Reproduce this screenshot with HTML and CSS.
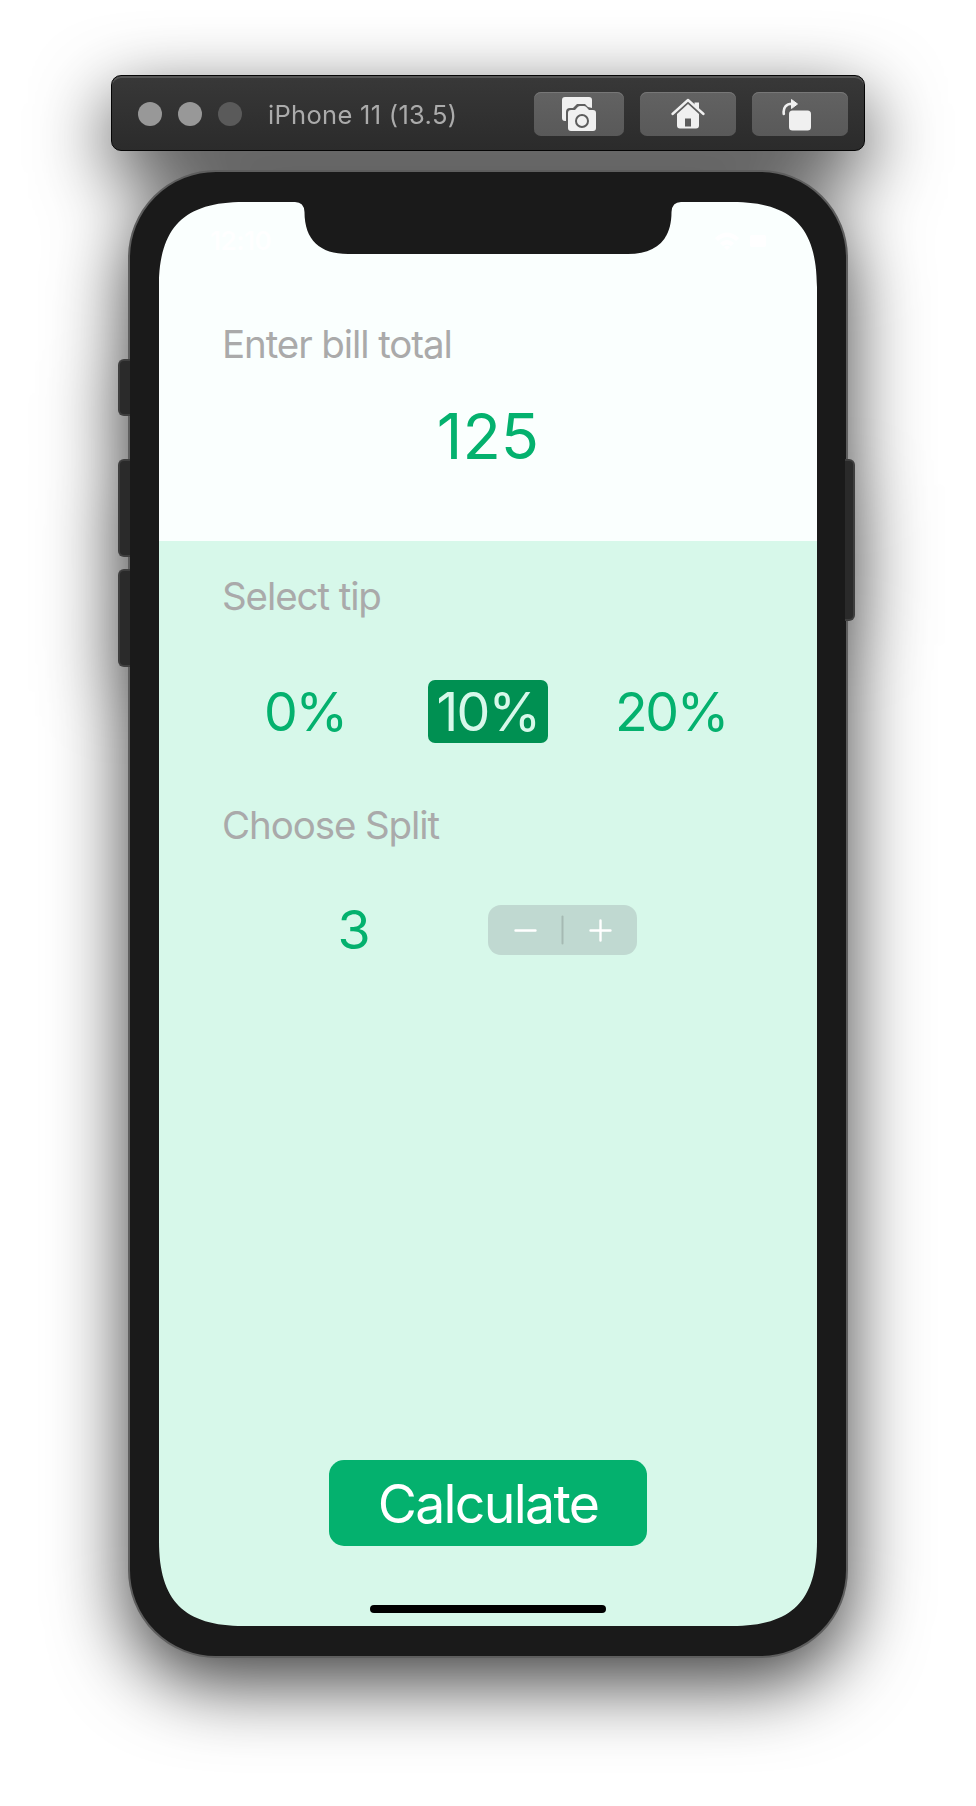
FILE: index.html
```
<!DOCTYPE html>
<html lang="en">
<head>
<meta charset="utf-8">
<title>Tip calculator</title>
<link rel="stylesheet" href="styles.css">
</head>
<body>
<div class="window">
<header class="toolbar">
  <span class="dot"></span><span class="dot"></span><span class="dot dot-dim"></span>
  <h1 class="toolbar-title">iPhone 11 (13.5)</h1>
  <div class="tool tool-shot">
    <svg width="36" height="36" viewBox="0 0 36 36">
      <path fill="#f0f0f0" d="M4 1h24a3 3 0 0 1 3 3v8l-4-1-3-3h-8l-4 4h-3a4 4 0 0 0-4 4V25H4a3 3 0 0 1-3-3V4a3 3 0 0 1 3-3z"/>
      <path fill="#f0f0f0" fill-rule="evenodd" d="M10 14h4l3-3.200q1-.8 2-.8h4q1 0 2 .8l3 3.200h4a3 3 0 0 1 3 3v15a3 3 0 0 1-3 3H10a3 3 0 0 1-3-3V17a3 3 0 0 1 3-3zm11 4a7 7 0 1 0 0 14 7 7 0 0 0 0-14zm0 2a5 5 0 1 1 0 10 5 5 0 0 1 0-10z"/>
    </svg>
  </div>
  <div class="tool">
    <svg width="36" height="36" viewBox="0 0 36 36">
      <path d="M2.500 18L18 4l15.500 14" fill="none" stroke="#f0f0f0" stroke-width="2.400" stroke-linecap="round" stroke-linejoin="round"/>
      <path fill="#f0f0f0" d="M24.500 6.500h4.500v7l-4.500-4z"/>
      <path fill="#f0f0f0" fill-rule="evenodd" d="M18 8l11 10V29.500a3 3 0 0 1-3 3H10a3 3 0 0 1-3-3V18zM15 22.500v8h6v-8z"/>
    </svg>
  </div>
  <div class="tool">
    <svg width="36" height="36" viewBox="0 0 36 36">
      <path d="M1.800 18C0.800 11 4.500 7.800 10 7.800" fill="none" stroke="#f0f0f0" stroke-width="2.600" stroke-linecap="round"/>
      <path fill="#f0f0f0" stroke="#f0f0f0" stroke-linejoin="round" d="M9.500 3.500v9l6-4.500z"/>
      <rect x="7" y="14.500" width="22" height="20" rx="3.500" fill="#f0f0f0"/>
    </svg>
  </div>
</header>

<main class="phone">
  <span class="key key-mute"></span><span class="key key-up"></span><span class="key key-down"></span><span class="key key-power"></span>
  <div class="screen">
    <section class="bill">
      <div class="status">
        <span class="clock">12:10</span>
        <svg width="54" height="18" viewBox="0 0 54 18" fill="#fff">
          <path d="M0 6q12-11 24 0l-3 3q-9-8-18 0zM5 11q7-6 14 0l-3 3q-4-3-8 0zM9 15q3-2 6 0l-3 3z"/>
          <rect x="35" y="3" width="16" height="12" rx="2"/>
        </svg>
      </div>
      <h2 class="label bill-label">Enter bill total</h2>
      <div class="amount">125</div>
    </section>
    <section class="options">
      <h2 class="label tip-label">Select tip</h2>
      <div class="tips">
        <button class="tip">0%</button>
        <button class="tip tip-selected">10%</button>
        <button class="tip">20%</button>
      </div>
      <h2 class="label split-label">Choose Split</h2>
      <div class="split">
        <span class="count">3</span>
        <svg class="stepper" width="149" height="50.5" viewBox="0 0 149 50.5" fill="none" stroke-linecap="round">
          <path d="M27.500 25.500h20M102.500 25.500h20M112.500 15.500v20" stroke="#fff" stroke-width="2.400"/>
          <path d="M74.500 11.500v27" stroke="#a5bab3" stroke-width="2"/>
        </svg>
      </div>
      <button class="calculate">Calculate</button>
      <div class="home-bar"></div>
    </section>
  </div>
</main>
</div>
</body>
</html>
```

FILE: styles.css
```
* { box-sizing: border-box; }

body {
  margin: 0;
  width: 976px;
  height: 1806px;
  overflow: hidden;
  background: #fff;
  font-family: Inter, "Liberation Sans", sans-serif;
}

h1, h2 { margin: 0; font-weight: 400; }

button {
  border: 0;
  padding: 0;
  font: inherit;
  background: none;
}

/* One shadow is cast by the toolbar and the phone together */
.window {
  width: 976px;
  height: 1806px;
  padding-top: 75px;
  filter: drop-shadow(0 25px 38px rgba(0, 0, 0, .76));
}

.toolbar {
  display: flex;
  align-items: center;
  width: 754px;
  height: 76px;
  margin-left: 111px;
  padding: 1px 16px 0 26px;
  border: 1px solid #050505;
  border-radius: 10px;
  background: linear-gradient(#383838, #2b2b2b);
  box-shadow: inset 0 2px 0 #555;
}

.dot {
  width: 24px;
  height: 24px;
  margin-right: 16px;
  border-radius: 50%;
  background: #989898;
}

.dot-dim { background: #5a5a5a; }

.toolbar-title {
  flex: 1;
  margin-left: 10px;
  padding-top: 1px;
  font-size: 25.5px;
  letter-spacing: .3px;
  color: #ababab;
  white-space: nowrap;
}

.tool {
  display: flex;
  align-items: center;
  justify-content: center;
  width: 96px;
  height: 44px;
  margin-left: 16px;
  border-radius: 7px;
  background: linear-gradient(#626262, #595959);
  box-shadow: inset 0 1px 0 #777;
}

.tool-shot { width: 90px; }

.phone {
  position: relative;
  width: 720px;
  height: 1488px;
  margin: 19px 0 0 128px;
  padding: 30px 29px;
  border: 2px solid #5e5e5e;
  border-radius: 88px;
  background: #1a1a1a;
}

/* Hardware keys sit on the outer rim of the case */
.key {
  position: absolute;
  left: -12px;
  width: 12px;
  border: 2px solid #3e3e3e;
  border-right: 0;
  border-radius: 6px 0 0 6px;
  background: #2a2a2a;
}

.key-mute { top: 187px; height: 57px; }
.key-up { top: 287px; height: 98px; }
.key-down { top: 397px; height: 98px; }

.key-power {
  top: 287px;
  left: auto;
  right: -9px;
  width: 10px;
  height: 162px;
  border-right: 2px solid #3e3e3e;
  border-left: 0;
  border-radius: 0 6px 6px 0;
}

/* Continuous-curvature corners with the sensor notch cut out of the top edge */
.screen {
  display: flex;
  flex-direction: column;
  width: 658px;
  height: 1424px;
  clip-path: path("M0 85C0 25 25 0 85 0H136Q145 0 145.500 10C145.500 38 161 52 189 52H469C497 52 512.500 38 512.500 10Q513 0 522 0H573C633 0 658 25 658 85V1339C658 1399 633 1424 573 1424H85C25 1424 0 1399 0 1339Z");
}

.bill {
  height: 338.5px;
  background: #fafffe;
}

.status {
  display: flex;
  align-items: center;
  justify-content: space-between;
  height: 119px;
  padding: 0 48px 42px 51px;
  color: #fff;
}

.clock {
  font-size: 26px;
  font-weight: 600;
  letter-spacing: -.5px;
}

.label {
  height: 46px;
  padding-left: 63px;
  font-size: 38.5px;
  line-height: 46px;
  letter-spacing: -1.1px;
  color: #aaa;
  white-space: nowrap;
}

.amount {
  margin-top: 34px;
  font-size: 63px;
  line-height: 70px;
  text-align: center;
  color: #04b16e;
}

.options {
  flex: 1;
  display: flex;
  flex-direction: column;
  padding: 32.5px 0 13px;
  background: #d7f8ea;
}

.tips {
  display: grid;
  grid-template-columns: repeat(3, 183px);
  justify-content: center;
  justify-items: center;
  margin: 60.5px 0 59.5px;
}

.tip {
  height: 63px;
  font-size: 53.6px;
  line-height: 63px;
  letter-spacing: -2.3px;
  color: #04b16e;
}

.tip-selected {
  width: 120px;
  border-radius: 7px;
  background: #009052;
  letter-spacing: -1.8px;
  color: #d7f8ea;
}

.split {
  display: flex;
  align-items: center;
  height: 50.5px;
  margin-top: 56.5px;
  padding-left: 61px;
}

.count {
  width: 268px;
  font-size: 53.6px;
  text-align: center;
  color: #04b16e;
}

.stepper {
  border-radius: 13px;
  background: #c0d9d1;
}

.calculate {
  align-self: center;
  width: 318px;
  height: 86px;
  margin-top: auto;
  border-radius: 15px;
  background: #04b16e;
  font-size: 53.6px;
  line-height: 87px;
  letter-spacing: -1.7px;
  color: #fff;
}

.home-bar {
  align-self: center;
  width: 236px;
  height: 8.5px;
  margin-top: 58.5px;
  border-radius: 5px;
  background: #000;
}
```
